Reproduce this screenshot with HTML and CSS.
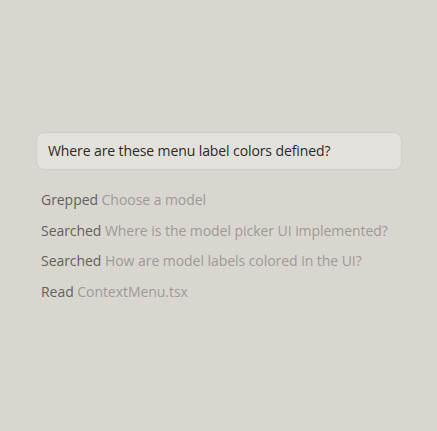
FILE: index.html
```html
<!DOCTYPE html>
<html>
<head>
<meta charset="utf-8">
<link rel="stylesheet" href="styles.css">
</head>
<body>
<div class="page">
  <div class="bubble">Where are these menu label colors defined?</div>
  <ul class="steps">
    <li><span class="label">Grepped</span> <span class="detail">Choose a model</span></li>
    <li><span class="label">Searched</span> <span class="detail">Where is the model picker UI implemented?</span></li>
    <li><span class="label">Searched</span> <span class="detail">How are model labels colored in the UI?</span></li>
    <li><span class="label">Read</span> <span class="detail">ContextMenu.tsx</span></li>
  </ul>
</div>
</body>
</html>
```
FILE: styles.css
```css
html, body {
  margin: 0;
  padding: 0;
  background: #d9d6d0;
  height: 100%;
}
body {
  font-family: "Open Sans", "Noto Sans", sans-serif;
  font-size: 14px;
}
.page {
  padding: 132px 35px 0 36px;
}
.bubble {
  background: #e3e1dc;
  border: 1px solid #d2cfc9;
  border-radius: 8px;
  padding: 0 11px;
  height: 36px;
  line-height: 36px;
  color: #2b2a28;
  letter-spacing: -0.1px;
}
.steps {
  list-style: none;
  margin: 20px 0 0 0;
  padding: 0 0 0 5px;
}
.steps li {
  height: 30.6px;
  line-height: 20px;
  letter-spacing: -0.05px;
}
.label {
  color: #64615d;
}
.detail {
  color: #9d9a95;
}
```
